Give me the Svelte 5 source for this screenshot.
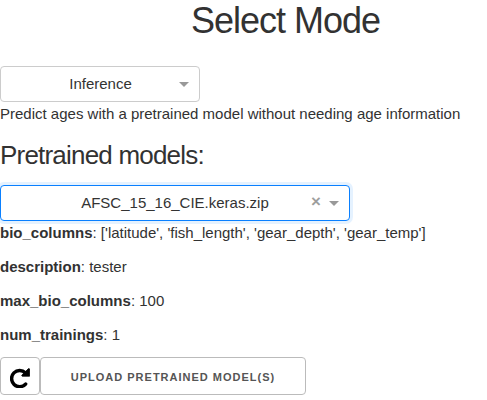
<script>
  const details = [
    ['bio_columns', "['latitude', 'fish_length', 'gear_depth', 'gear_temp']"],
    ['description', 'tester'],
    ['max_bio_columns', '100'],
    ['num_trainings', '1']
  ];
</script>

<main>
  <h2>Select Mode</h2>

  <div class="select mode">
    <span class="value">Inference</span>
    <span class="arrow"></span>
  </div>
  <div class="hint">Predict ages with a pretrained model without needing age information</div>

  <h4>Pretrained models:</h4>

  <div class="select model focused">
    <span class="value">AFSC_15_16_CIE.keras.zip</span>
    <span class="clear">×</span>
    <span class="arrow"></span>
  </div>

  {#each details as [name, value]}
    <p><strong>{name}</strong>: {value}</p>
  {/each}

  <div class="actions">
    <button class="refresh" aria-label="Refresh">
      <svg width="20" height="20" viewBox="0 0 20 20">
        <path d="M15.6 16.1A8.1 8.1 0 1 1 15.4 4.8" fill="none" stroke="#000" stroke-width="3.5" stroke-linecap="round" />
        <path d="M19.6 .9V8.2H12.2L11.7 7.2L18.5 .6Z" fill="#000" stroke="#000" stroke-width=".8" stroke-linejoin="round" />
      </svg>
    </button>
    <button class="upload">Upload Pretrained Model(s)</button>
  </div>
</main>

<style>
  :global(body) {
    margin: 0;
    background: #fff;
  }
  main {
    font: 15px/24px "Liberation Sans", Arial, sans-serif;
    color: #323232;
  }
  h2 {
    box-sizing: border-box;
    height: 66px;
    margin: 0;
    padding-left: 84px;
    font-size: 36px;
    line-height: 41px;
    font-weight: 300;
    letter-spacing: -1px;
    text-align: center;
  }
  h4 {
    margin: 12px 0;
    font-size: 26px;
    line-height: 35px;
    font-weight: 300;
    letter-spacing: -0.8px;
  }
  .select {
    box-sizing: border-box;
    display: flex;
    align-items: center;
    height: 36px;
    border: 1px solid #ccc;
    border-radius: 4px;
    background: #fff;
    color: #333;
  }
  .mode {
    width: 200px;
    padding-right: 10px;
  }
  .model {
    width: 350px;
    padding-right: 10px;
  }
  .focused {
    border-color: #0a80ff;
    box-shadow: 0 0 0 3px rgba(0, 126, 255, 0.1);
  }
  .value {
    flex: 1;
    text-align: center;
  }
  .mode .value {
    padding-left: 21px;
  }
  .model .value {
    padding-left: 38px;
  }
  .clear {
    width: 18px;
    margin-top: -2px;
    font-size: 17px;
    line-height: 18px;
    color: #999;
    -webkit-text-stroke: 0.5px #999;
  }
  .arrow {
    border: 5px solid transparent;
    border-top-color: #999;
    border-bottom: 0;
  }
  p {
    margin: 0 0 10px;
  }
  .actions {
    display: flex;
  }
  button {
    box-sizing: border-box;
    height: 38px;
    padding: 0;
    border: 1px solid #bbb;
    border-radius: 4px;
    background: transparent;
    color: #555;
    font: 600 11px/38px "Liberation Sans", Arial, sans-serif;
    letter-spacing: 1px;
    text-transform: uppercase;
  }
  .refresh {
    display: flex;
    align-items: center;
    justify-content: center;
    width: 40px;
    padding-top: 4px;
  }
  .upload {
    width: 266px;
  }
</style>
